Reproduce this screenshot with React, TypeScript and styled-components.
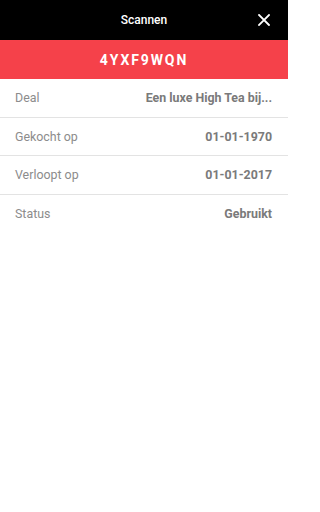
import React from 'react'
import styled, { createGlobalStyle } from 'styled-components'

const GlobalStyle = createGlobalStyle`
  html, body {
    margin: 0;
    padding: 0;
    background: #ffffff;
    font-family: Roboto, 'Noto Sans', sans-serif;
  }
`

const Screen = styled.div`
  width: 288px;
  min-height: 512px;
  background: #ffffff;
  display: flex;
  flex-direction: column;
`

const Header = styled.header`
  height: 40px;
  background: #000000;
  display: grid;
  grid-template-columns: 40px 1fr 40px;
  align-items: center;
`

const Title = styled.h1`
  grid-column: 2;
  margin: 0;
  text-align: center;
  color: #ffffff;
  font-size: 12px;
  font-weight: 500;
`

const CloseButton = styled.button`
  grid-column: 3;
  width: 40px;
  height: 40px;
  padding: 0;
  border: none;
  background: transparent;
  display: flex;
  align-items: center;
  justify-content: center;
  margin-left: -4px;
`

const CodeBar = styled.div`
  height: 39px;
  background: #f5414a;
  color: #ffffff;
  display: flex;
  align-items: center;
  justify-content: center;
  font-size: 14px;
  font-weight: 700;
  letter-spacing: 1.9px;
`

const List = styled.div`
  display: flex;
  flex-direction: column;
`

const Row = styled.div<{ divider: boolean }>`
  height: 37.5px;
  padding: 0 16px 0 15px;
  display: flex;
  align-items: center;
  justify-content: space-between;
  gap: 12px;
  border-bottom: ${({ divider }) => (divider ? '1px solid #e3e3e3' : 'none')};
  font-size: 12.4px;
`

const Label = styled.span`
  color: #8c8c8c;
  white-space: nowrap;
`

const Value = styled.span`
  color: #7a7a7a;
  font-weight: 700;
  white-space: nowrap;
`

const rows = [
  { label: 'Deal', value: 'Een luxe High Tea bij...' },
  { label: 'Gekocht op', value: '01-01-1970' },
  { label: 'Verloopt op', value: '01-01-2017' },
  { label: 'Status', value: 'Gebruikt' },
]

export default function App() {
  return (
    <>
      <GlobalStyle />
      <Screen>
        <Header>
          <Title>Scannen</Title>
          <CloseButton aria-label="Sluiten">
            <svg width="12" height="12" viewBox="0 0 12 12">
              <path d="M1 1L11 11M11 1L1 11" stroke="#ffffff" strokeWidth="1.8" strokeLinecap="square" />
            </svg>
          </CloseButton>
        </Header>
        <CodeBar>4YXF9WQN</CodeBar>
        <List>
          {rows.map((row, i) => (
            <Row key={row.label} divider={i < rows.length - 1}>
              <Label>{row.label}</Label>
              <Value>{row.value}</Value>
            </Row>
          ))}
        </List>
      </Screen>
    </>
  )
}
